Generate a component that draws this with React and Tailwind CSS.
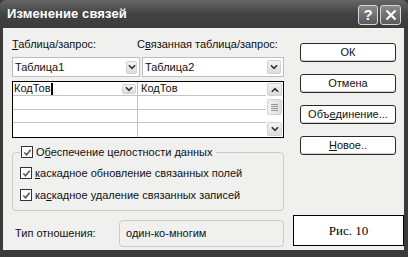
import React from 'react';

const ui = { fontFamily: '"Liberation Sans", Arial, sans-serif' };

function Chevron({ className = '' }) {
  return (
    <svg viewBox="0 0 9 6" className={className}>
      <path d="M1 1 L4.5 4.5 L8 1" fill="none" stroke="#333" strokeWidth="1.8" />
    </svg>
  );
}

function ArrowBtn({ up = false, className = '' }) {
  return (
    <div className={`flex items-center justify-center rounded-[2px] border border-[#d2d2d2] bg-gradient-to-b from-[#f4f4f4] to-[#dcdcdc] ${className}`}>
      <Chevron className={`w-[8px] h-[6px] ${up ? 'rotate-180' : ''}`} />
    </div>
  );
}

function Check({ children }) {
  return (
    <div className="flex items-center h-[14px]">
      <div className="w-[12px] h-[12px] border border-[#333] bg-white flex items-center justify-center mr-[3px]">
        <svg viewBox="0 0 10 10" className="w-[9px] h-[9px]">
          <path d="M1.5 5 L4 7.5 L8.5 2" fill="none" stroke="#555" strokeWidth="1.8" />
        </svg>
      </div>
      <span className="text-[11px] text-[#111] whitespace-nowrap">{children}</span>
    </div>
  );
}

function Btn({ children }) {
  return (
    <div className="w-[96px] h-[19px] rounded-[3px] border border-[#2a2a2a] bg-white flex items-center justify-center text-[11px] text-[#111] shadow-[inset_0_-1px_0_#cfcfcf]">
      {children}
    </div>
  );
}

export default function App() {
  return (
    <div style={ui} className="w-[408px] h-[257px] flex flex-col bg-[#3a3a3a] overflow-hidden">
      {/* Title bar */}
      <div className="h-[28px] flex items-center rounded-t-[6px] bg-gradient-to-b from-[#666] via-[#434343] to-[#3b3b3b] pl-[7px] pr-[7px]">
        <span className="text-white font-bold text-[13px] tracking-[0.1px]">
          Изменение связей
        </span>
        <div className="ml-auto flex gap-[2px] pt-[1px]">
          <div className="w-[20px] h-[20px] rounded-[3px] border border-[#d8d8d8] bg-gradient-to-b from-[#8a8a8a] to-[#5a5a5a] flex items-center justify-center text-white font-bold text-[15px] leading-none">
            ?
          </div>
          <div className="w-[21px] h-[20px] rounded-[3px] border border-[#d8d8d8] bg-gradient-to-b from-[#8a8a8a] to-[#5a5a5a] flex items-center justify-center">
            <svg viewBox="0 0 12 12" className="w-[12px] h-[12px]">
              <path d="M1.5 1.5 L10.5 10.5 M10.5 1.5 L1.5 10.5" stroke="white" strokeWidth="2.2" />
            </svg>
          </div>
        </div>
      </div>

      {/* Client area */}
      <div className="flex-1 ml-[3px] mr-[4px] mb-[7px] flex bg-[#f0f0ee] bg-[radial-gradient(#dcdcdc_0.6px,transparent_0.7px)] bg-[size:4px_4px]">
        {/* Left column */}
        <div className="w-[272px] ml-[9px] flex flex-col">
          <div className="mt-[9px] h-[14px] flex text-[11px] text-[#111] leading-[14px] whitespace-nowrap">
            <span className="w-[125px]"><u>Т</u>аблица/запрос:</span>
            <span>С<u>в</u>язанная таблица/запрос:</span>
          </div>

          <div className="mt-[6px] h-[20px] flex gap-[2px]">
            <div className="w-[128px] border border-[#bdbdbd] bg-white flex items-center pl-[2px] pr-[2px]">
              <span className="text-[11px] text-[#111]">Таблица1</span>
              <ArrowBtn className="ml-auto w-[11px] h-[13px]" />
            </div>
            <div className="flex-1 border border-[#bdbdbd] bg-white flex items-center pl-[2px] pr-[2px]">
              <span className="text-[11px] text-[#111]">Таблица2</span>
              <ArrowBtn className="ml-auto w-[14px] h-[14px]" />
            </div>
          </div>

          {/* Grid */}
          <div className="mt-[4px] h-[57px] border border-black bg-white flex">
            <div className="flex-1 flex flex-col">
              {[0, 1, 2, 3].map((i) => (
                <div key={i} className={`flex h-[14px] ${i < 3 ? 'border-b border-[#c4c4c4]' : ''}`}>
                  <div className="w-[125px] border-r border-[#c4c4c4] flex items-center pl-[1px] pr-[1px]">
                    {i === 0 && (
                      <>
                        <span className="text-[11px] text-[#111]">КодТов</span>
                        <span className="w-[2px] h-[12px] bg-black" />
                        <ArrowBtn className="ml-auto w-[14px] h-[10px]" />
                      </>
                    )}
                  </div>
                  <div className="flex-1 flex items-center pl-[3px]">
                    {i === 0 && <span className="text-[11px] text-[#111]">КодТов</span>}
                  </div>
                </div>
              ))}
            </div>
            {/* Scrollbar */}
            <div className="w-[17px] flex flex-col items-center pt-[1px] pb-[1px]">
              <ArrowBtn up className="w-[15px] h-[13px]" />
              <div className="mt-[3px] w-[15px] h-[16px] rounded-[2px] border border-[#d2d2d2] bg-gradient-to-r from-[#f2f2f2] to-[#dedede] flex flex-col items-center justify-center gap-[1px]">
                <div className="w-[7px] h-px bg-[#999]" />
                <div className="w-[7px] h-px bg-[#999]" />
                <div className="w-[7px] h-px bg-[#999]" />
                <div className="w-[7px] h-px bg-[#999]" />
              </div>
              <ArrowBtn className="mt-auto w-[15px] h-[14px]" />
            </div>
          </div>

          {/* Integrity group */}
          <fieldset className="mt-[7px] h-[66px] border border-[#cbcbcb] rounded-[4px] pl-[7px] pb-[6px]">
            <legend className="pl-[1px] pr-[4px]">
              <Check>
                О<u>б</u>еспечение целостности данных
              </Check>
            </legend>
            <div className="mt-[7px] flex flex-col gap-[8px]">
              <Check>
                <u>к</u>аскадное обновление связанных полей
              </Check>
              <Check>
                ка<u>с</u>кадное удаление связанных записей
              </Check>
            </div>
          </fieldset>

          <div className="mt-[9px] flex items-center">
            <span className="w-[107px] pl-[3px] text-[11px] text-[#111]">Тип отношения:</span>
            <div className="flex-1 h-[27px] border border-[#cbcbcb] rounded-[4px] flex items-center pl-[6px]">
              <span className="text-[11px] text-[#111]">один-ко-многим</span>
            </div>
          </div>
        </div>

        {/* Right column */}
        <div className="ml-[9px] w-[111px] flex flex-col">
          <div className="ml-[7px] mt-[15px] flex flex-col gap-[12px]">
            <Btn>ОК</Btn>
            <Btn>Отмена</Btn>
            <Btn>
              Объ<u>е</u>динение...
            </Btn>
            <Btn>
              <u>Н</u>овое..
            </Btn>
          </div>
          <div className="mt-auto mb-[4px] h-[31px] border border-black bg-white flex items-center justify-center">
            <span className="text-[13px] text-black" style={{ fontFamily: '"Liberation Serif", serif' }}>
              Рис. 10
            </span>
          </div>
        </div>
      </div>
    </div>
  );
}
